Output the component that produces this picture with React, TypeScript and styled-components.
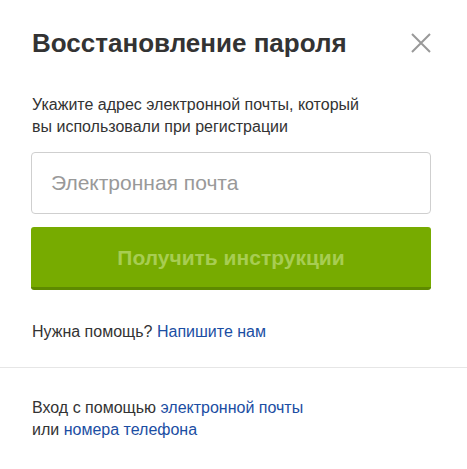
import React from "react";
import styled, { createGlobalStyle } from "styled-components";

const Global = createGlobalStyle`
  html, body { margin: 0; padding: 0; background: #fff; }
  body { font-family: "Liberation Sans", Arial, sans-serif; color: #333; }
  * { box-sizing: border-box; }
`;

const Dialog = styled.div`
  width: 467px;
  background: #fff;
  display: flex;
  flex-direction: column;
`;

const Section = styled.div<{ $pt: number; $pb: number }>`
  padding: ${(p) => p.$pt}px 36px ${(p) => p.$pb}px 31px;
  display: flex;
  flex-direction: column;
`;

const Header = styled.div`
  display: flex;
  align-items: center;
  justify-content: space-between;
`;

const Title = styled.h1`
  margin: 0 0 0 1px;
  font-size: 26px;
  line-height: 30px;
  font-weight: 700;
  color: #333;
`;

const CloseButton = styled.button`
  border: 0;
  background: none;
  padding: 0;
  width: 20px;
  height: 20px;
  display: flex;
  cursor: pointer;
`;

const Text = styled.p<{ $mt?: number }>`
  margin: ${(p) => p.$mt ?? 0}px 0 0 1px;
  font-size: 16px;
  line-height: 22px;
  color: #333;
`;

const Link = styled.a`
  color: #1b4ea3;
  text-decoration: none;
`;

const Input = styled.input`
  margin-top: 14px;
  width: 400px;
  height: 62px;
  border: 1px solid #cfcfcf;
  border-radius: 4px;
  padding: 0 19px;
  font-family: "Liberation Sans", Arial, sans-serif;
  font-size: 21px;
  color: #333;
  outline: none;
  &::placeholder { color: #999; }
`;

const SubmitButton = styled.button`
  margin-top: 13px;
  width: 400px;
  height: 63px;
  border: 0;
  border-bottom: 3px solid #5e8a00;
  border-radius: 3px;
  background: #77ab00;
  color: #a7cd52;
  font-family: "Liberation Sans", Arial, sans-serif;
  font-size: 21px;
  font-weight: 700;
  padding: 0;
  padding-top: 2px;
`;

const Divider = styled.hr`
  margin: 0;
  border: 0;
  height: 1px;
  background: #e6e6e6;
`;

export default function App() {
  return (
    <>
      <Global />
      <Dialog>
        <Section $pt={28} $pb={24}>
          <Header>
            <Title>Восстановление пароля</Title>
            <CloseButton aria-label="Закрыть">
              <svg width="20" height="20" viewBox="0 0 20 20">
                <path d="M1 1 L19 19 M19 1 L1 19" stroke="#999" strokeWidth="2" fill="none" />
              </svg>
            </CloseButton>
          </Header>
          <Text $mt={36}>
            Укажите адрес электронной почты, который
            <br />
            вы использовали при регистрации
          </Text>
          <Input placeholder="Электронная почта" />
          <SubmitButton disabled>Получить инструкции</SubmitButton>
          <Text $mt={31}>
            Нужна помощь? <Link href="#">Напишите нам</Link>
          </Text>
        </Section>
        <Divider />
        <Section $pt={29} $pb={30}>
          <Text>
            Вход с помощью <Link href="#">электронной почты</Link>
            <br />
            или <Link href="#">номера телефона</Link>
          </Text>
        </Section>
      </Dialog>
    </>
  );
}
